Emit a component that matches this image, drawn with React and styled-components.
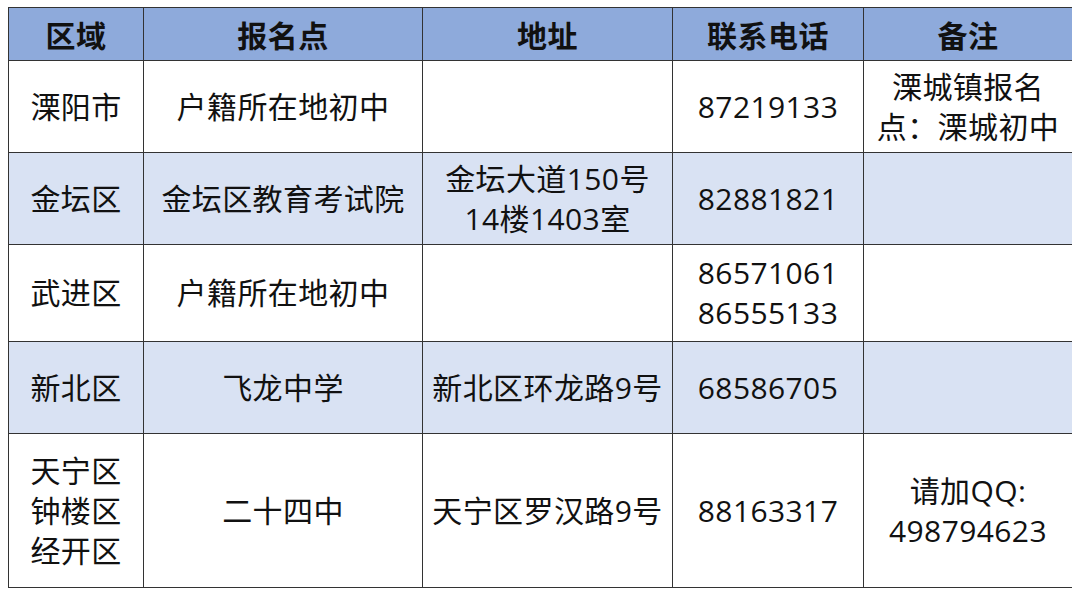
import React from 'react';
import styled, { createGlobalStyle } from 'styled-components';

const GlobalStyle = createGlobalStyle`
  body {
    margin: 7px 8px;
    background: #ffffff;
    font-family: "Open Sans", "Noto Sans CJK SC", sans-serif;
    color: #111111;
  }
`;

const columns = [
  { title: '区域', width: 135 },
  { title: '报名点', width: 279 },
  { title: '地址', width: 250 },
  { title: '联系电话', width: 191 },
  { title: '备注', width: 209 },
];

const rows = [
  { height: 92, cells: [['溧阳市'], ['户籍所在地初中'], [], ['87219133'], ['溧城镇报名', '点：溧城初中']] },
  { height: 92, cells: [['金坛区'], ['金坛区教育考试院'], ['金坛大道150号', '14楼1403室'], ['82881821'], []] },
  { height: 97, cells: [['武进区'], ['户籍所在地初中'], [], ['86571061', '86555133'], []] },
  { height: 92, cells: [['新北区'], ['飞龙中学'], ['新北区环龙路9号'], ['68586705'], []] },
  { height: 154, cells: [['天宁区', '钟楼区', '经开区'], ['二十四中'], ['天宁区罗汉路9号'], ['88163317'], ['请加QQ:', '498794623']] },
];

const App = () => {
  return (
    <>
      <GlobalStyle />
      <Table>
        <colgroup>
          {columns.map((c) => (
            <col key={c.title} style={{ width: c.width }} />
          ))}
        </colgroup>
        <thead>
          <tr>
            {columns.map((c) => (
              <HeadCell key={c.title}>{c.title}</HeadCell>
            ))}
          </tr>
        </thead>
        <tbody>
          {rows.map((row, i) => (
            <Row key={i} $striped={i % 2 === 1} style={{ height: row.height }}>
              {row.cells.map((lines, j) => (
                <Cell key={j}>
                  {lines.map((line) => (
                    <Line key={line}>{line}</Line>
                  ))}
                </Cell>
              ))}
            </Row>
          ))}
        </tbody>
      </Table>
    </>
  );
};

const Table = styled.table`
  width: 1064px;
  table-layout: fixed;
  border-collapse: collapse;
  border: 1px solid #333333;
`;

const HeadCell = styled.th`
  height: 52px;
  background-color: #8eaadb;
  border: 1px solid #333333;
  font-size: 30px;
  font-weight: 700;
  letter-spacing: 0.5px;
  text-align: center;
  vertical-align: middle;
  padding: 0;
  color: #111111;
`;

const Row = styled.tr`
  background-color: ${(p) => (p.$striped ? '#d9e2f3' : '#ffffff')};
`;

const Cell = styled.td`
  border: 1px solid #333333;
  text-align: center;
  vertical-align: middle;
  padding: 0 2px;
  font-size: 30px;
  letter-spacing: 0.4px;
  line-height: 40px;
`;

const Line = styled.div`
  white-space: nowrap;
`;

export default App;
